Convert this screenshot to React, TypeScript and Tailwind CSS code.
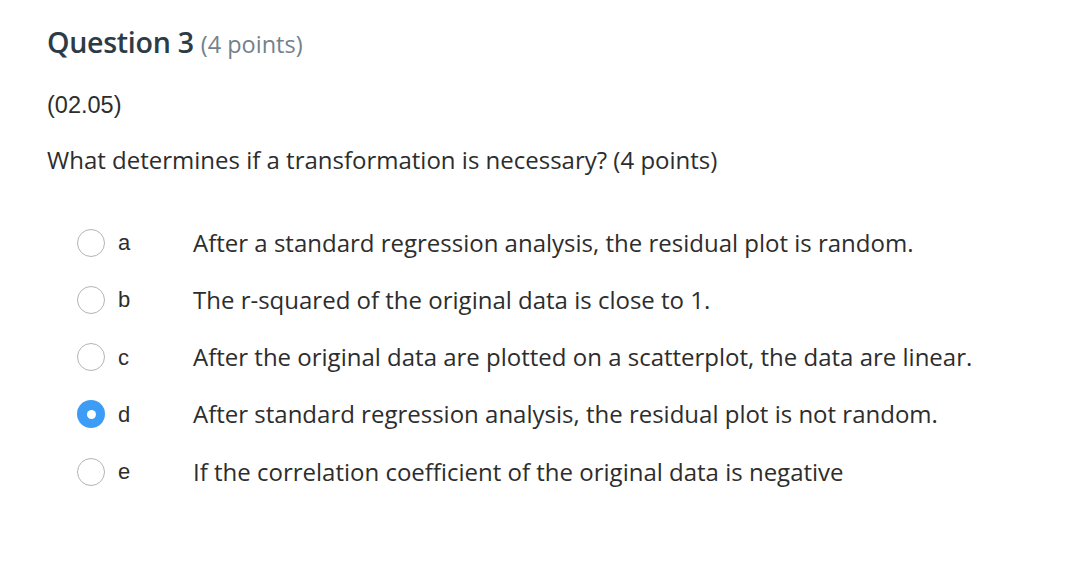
import React from "react";

const options = [
  { l: "a", t: "After a standard regression analysis, the residual plot is random." },
  { l: "b", t: "The r-squared of the original data is close to 1." },
  { l: "c", t: "After the original data are plotted on a scatterplot, the data are linear." },
  { l: "d", t: "After standard regression analysis, the residual plot is not random.", sel: true },
  { l: "e", t: "If the correlation coefficient of the original data is negative" },
];

export default function App() {
  return (
    <div className="w-[1080px] h-[564px] bg-white text-[#2d2d2d] pl-[47px] pt-[21px]" style={{ fontFamily: '"Open Sans", sans-serif' }}>
      <div className="flex items-baseline h-[42px]">
        <span className="text-[28.6px] font-semibold text-[#2d3b45] tracking-[-0.3px]">Question 3</span>
        <span className="text-[23.5px] text-[#73818c] ml-[7px]">(4 points)</span>
      </div>
      <div className="mt-[26px] text-[23.5px] leading-[32px] text-[#2d2d2d]" style={{ fontFamily: '"Liberation Sans", Arial, sans-serif' }}>(02.05)</div>
      <div className="mt-[23px] text-[24px] leading-[32px] text-[#2d2d2d]">What determines if a transformation is necessary? (4 points)</div>
      <div className="mt-[38px] flex flex-col">
        {options.map((o) => (
          <div key={o.l} className="flex items-center h-[57.25px]">
            <div className="w-[86px] flex items-center">
              {o.sel ? (
                <div className="ml-[30px] w-[28px] h-[28px] rounded-full bg-[#3d9cf5] flex items-center justify-center">
                  <div className="w-[9px] h-[9px] rounded-full bg-white" />
                </div>
              ) : (
                <div className="ml-[30px] w-[28px] h-[28px] rounded-full border border-[#b4b4b4] bg-white" />
              )}
              <span className="ml-[13px] text-[22px]" style={{ fontFamily: '"Liberation Sans", Arial, sans-serif' }}>{o.l}</span>
            </div>
            <span className="ml-[60px] text-[24px]">{o.t}</span>
          </div>
        ))}
      </div>
    </div>
  );
}
